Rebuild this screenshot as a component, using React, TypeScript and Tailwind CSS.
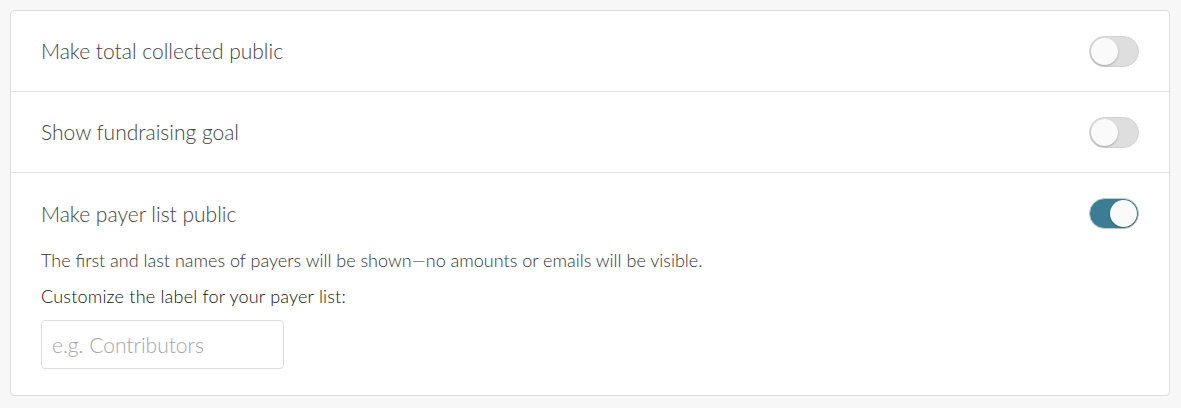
import { useState } from 'react';

function Toggle({ on, onClick }: { on: boolean; onClick: () => void }) {
  return (
    <button
      type="button"
      onClick={onClick}
      className={`relative w-[50px] h-[31px] rounded-full border shrink-0 transition-colors ${on ? 'bg-[#3b7d92] border-[#c9c9c9]' : 'bg-[#dedede] border-[#d2d2d2]'}`}
    >
      <span
        className={`absolute top-[1px] w-[27px] h-[27px] rounded-full bg-[#fafafa] shadow-[0_1px_2px_rgba(0,0,0,0.25)] ${on ? 'right-[1px]' : 'left-[1px]'}`}
      />
    </button>
  );
}

export default function App() {
  const [total, setTotal] = useState(false);
  const [goal, setGoal] = useState(false);
  const [payers, setPayers] = useState(true);

  return (
    <div className="min-h-[408px] bg-[#f7f7f7] p-[10px] pr-[11px]" style={{ fontFamily: 'Lato, "Open Sans", sans-serif' }}>
      <div className="bg-white border border-[#dcdcdc] rounded-[4px]">
        <div className="h-[81px] flex items-center justify-between pl-[30px] pr-[30px] border-b border-[#e3e3e3]">
          <span className="text-[21px] font-light text-[#444]">Make total collected public</span>
          <Toggle on={total} onClick={() => setTotal(!total)} />
        </div>
        <div className="h-[81px] flex items-center justify-between pl-[30px] pr-[30px] border-b border-[#e3e3e3]">
          <span className="text-[21px] font-light text-[#444]">Show fundraising goal</span>
          <Toggle on={goal} onClick={() => setGoal(!goal)} />
        </div>
        <div className="pl-[30px] pr-[30px] pt-[25px] pb-[26px]">
          <div className="flex items-center justify-between h-[31px]">
            <span className="text-[21px] font-light text-[#444]">Make payer list public</span>
            <Toggle on={payers} onClick={() => setPayers(!payers)} />
          </div>
          <p className="mt-[19px] text-[18px] font-light text-[#333] leading-[24px]">
            The first and last names of payers will be shown—no amounts or emails will be visible.
          </p>
          <label className="block mt-[12px] text-[18px] font-light text-[#111] leading-[24px] tracking-[0.2px]">Customize the label for your payer list:</label>
          <input
            placeholder="e.g. Contributors"
            className="block mt-[12px] w-[243px] h-[49px] px-[10px] border border-[#dcdcdc] rounded-[4px] text-[21px] font-light text-[#444] placeholder:text-[#a6a6a6] outline-none"
          />
        </div>
      </div>
    </div>
  );
}
